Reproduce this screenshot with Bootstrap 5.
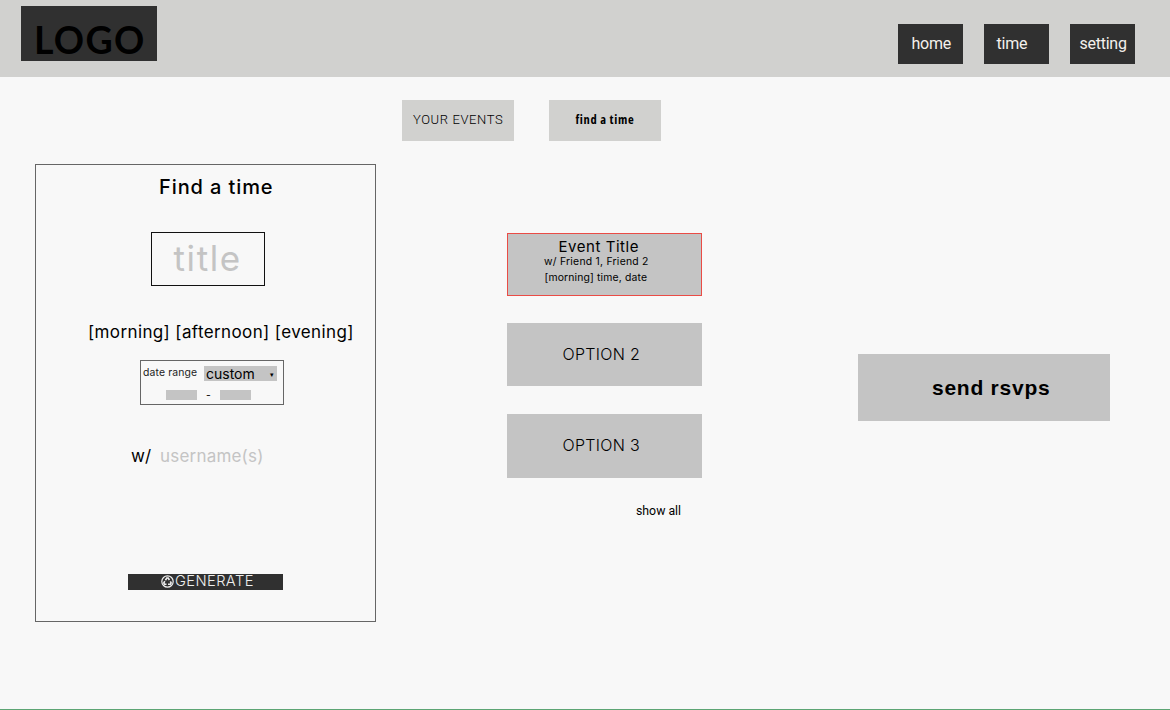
<!DOCTYPE html>
<html lang="en">
<head>
<meta charset="utf-8">
<meta name="viewport" content="width=device-width, initial-scale=1">
<title>Find a time</title>
<link href="https://cdn.jsdelivr.net/npm/bootstrap@5.3.0/dist/css/bootstrap.min.css" rel="stylesheet">
<style>
body{background:#f8f8f8;color:#000;height:710px;overflow:hidden;font-family:Inter,"Liberation Sans",sans-serif;border-bottom:1px solid #5ca574;line-height:1}
.topbar{height:77.4px;background:#d1d1cf;padding:6px 35px 0 21px}
.logo-box{width:136px;height:55px;background:#303030;padding:15px 0 0 13px;font:700 37.5px/38px Lato,sans-serif;letter-spacing:1.3px}
.tile{width:65px;height:40px;background:#303030;color:#f4f0ec;font:16px/39px Roboto,sans-serif;letter-spacing:-.25px}
.tile-home{padding-left:13.5px}
.tile-time{padding-left:12.5px}
.tile-setting{padding-left:9.5px}
.menu{gap:21px;margin-top:18.4px}
.tabs{gap:35px;padding:22.6px 0 0 402px}
.tab-box{width:112px;height:41px;background:#d1d1cf;line-height:39px}
.tab-events{font-family:Roboto,sans-serif;font-weight:300;font-size:13px;letter-spacing:.6px;padding-left:11px}
.tab-find{font-family:"Open Sans",sans-serif;font-weight:700;font-stretch:75%;font-size:12.5px;letter-spacing:.65px;padding-left:26.5px}
.light{font-weight:300}
.cols{padding-top:23px}
.finder{width:341px;height:458px;margin-left:35px;border:1px solid #666}
.finder-head{font-size:20px;font-weight:500;line-height:20px;padding:12px 0 0 123px;letter-spacing:.9px;height:31px}
.title-box{width:114px;height:54px;margin:36px 0 0 115px;border:1px solid #111;color:#c4c4c4;font-size:35px;line-height:50px;padding-left:21.5px;letter-spacing:1.6px}
.dayparts{font-size:17px;line-height:20px;margin:36px 0 0 52px;letter-spacing:.38px}
.range{width:144px;height:45px;margin:18px 0 0 104px;border:1px solid #666;padding:5px 0 0 2px;font-size:10.4px}
.range-label{line-height:13px;letter-spacing:.15px;color:#222}
.pick{width:73px;height:15px;background:#c4c4c4;font-size:14px;line-height:15px;padding:0 3px 0 2px}
.slot{width:31px;height:10px;background:#c4c4c4}
.gen{width:155px;height:16px;margin:108px 0 0 92px;background:#303030;color:#eee;font-size:14.7px;line-height:17px;padding-left:33px}
.options{width:195px;margin:69px 0 0 130.5px}
.opt{width:195px;height:63.5px;background:#c4c4c4}
.opt-picked{border:1px solid #ea4c46;margin-bottom:26.5px;padding-top:5px}
.opt-x{font-size:16px;line-height:63px;padding-left:56px;margin-bottom:27.6px;letter-spacing:.3px}
.send{width:252px;height:67px;margin:190px 0 0 156.5px;background:#c4c4c4;font:700 21px/67px "Liberation Sans",sans-serif;padding:0 0 1px 74px;letter-spacing:.75px}
</style>
</head>
<body class="text-nowrap">
<header class="topbar d-flex justify-content-between align-items-start">
  <div class="logo-box">LOGO</div>
  <nav class="menu d-flex">
    <a class="tile tile-home text-decoration-none">home</a>
    <a class="tile tile-time text-decoration-none">time</a>
    <a class="tile tile-setting text-decoration-none">setting</a>
  </nav>
</header>
<div class="tabs d-flex">
  <div class="tab-box tab-events">YOUR EVENTS</div>
  <div class="tab-box tab-find">find a time</div>
</div>
<main class="cols d-flex align-items-start">
  <section class="finder flex-shrink-0">
    <h1 class="finder-head m-0">Find a time</h1>
    <div class="title-box">title</div>
    <div class="dayparts">[morning] [afternoon] [evening]</div>
    <div class="range">
      <div class="d-flex justify-content-between" style="padding-right:6px"><span class="range-label">date range</span><span class="pick d-flex justify-content-between"><span>custom</span><span style="font-size:7px;line-height:17px">▾</span></span></div>
      <div class="d-flex align-items-center" style="margin:9px 0 0 23px"><span class="slot"></span><span class="text-center" style="width:23px;line-height:12px;height:10px">-</span><span class="slot"></span></div>
    </div>
    <div class="d-flex" style="font-size:17px;line-height:20px;margin:41px 0 0 95px"><span style="width:29px">w/</span><span style="color:#c4c4c4;letter-spacing:.2px">username(s)</span></div>
    <div class="gen light d-flex align-items-center">
      <svg width="13" height="13" viewBox="0 0 13 13" fill="none" stroke="#eee"><circle cx="6.5" cy="6.5" r="5.7" stroke-width="1.2"/><path d="M4.4 5.2 5.8 3h1.4l1.2 2M9.3 6.4l.8 1.6-.8 1.3H7M5.5 9.3H3.6l-.8-1.3 1-1.8" stroke-width="1.6"/></svg>
      <span style="margin-left:1px;letter-spacing:.4px">GENERATE</span>
    </div>
  </section>
  <section class="options flex-shrink-0">
    <div class="opt opt-picked">
      <div style="font-size:15px;line-height:16px;padding-left:51px;letter-spacing:.55px">Event Title</div>
      <div style="font-size:10.4px;line-height:14px;padding-left:36.5px;letter-spacing:.25px">w/ Friend 1, Friend 2</div>
      <div style="font-size:10.4px;line-height:17px;padding-left:37px;letter-spacing:.15px">[morning] time, date</div>
    </div>
    <div class="opt opt-x light">OPTION 2</div>
    <div class="opt opt-x light">OPTION 3</div>
    <div style="font:12.3px/14px Roboto,sans-serif;margin-left:129.5px;margin-top:-1.3px">show all</div>
  </section>
  <button class="send border-0 text-start flex-shrink-0">send rsvps</button>
</main>
<script src="https://cdn.jsdelivr.net/npm/bootstrap@5.3.0/dist/js/bootstrap.bundle.min.js"></script>
</body>
</html>
